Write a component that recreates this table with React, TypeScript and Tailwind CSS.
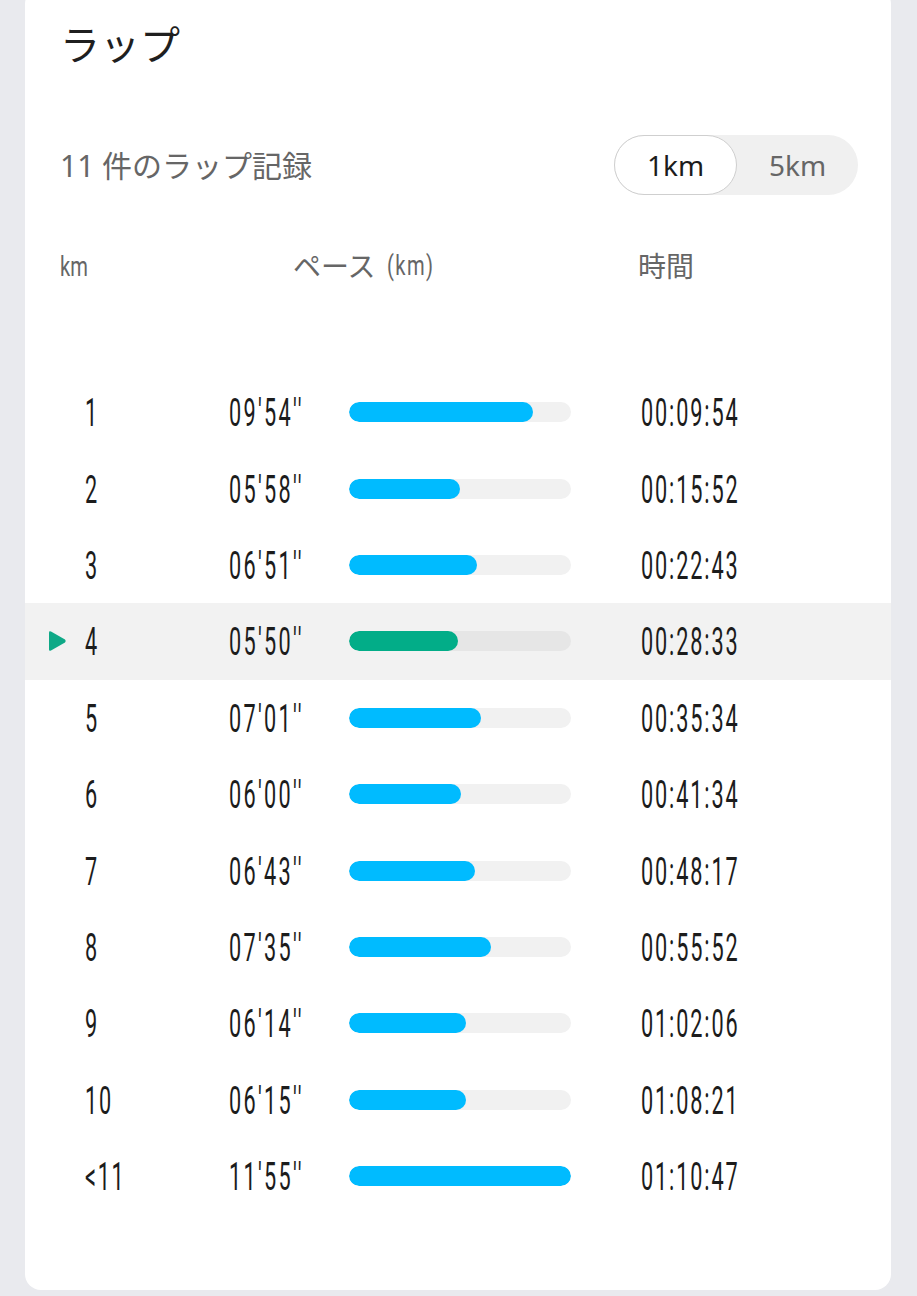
import type { ReactNode } from 'react'

type Lap = {
  km: string
  pace: string
  time: string
  fill: number
  current?: boolean
}

const laps: Lap[] = [
  { km: '1', pace: "09'54''", time: '00:09:54', fill: 184 },
  { km: '2', pace: "05'58''", time: '00:15:52', fill: 111 },
  { km: '3', pace: "06'51''", time: '00:22:43', fill: 128 },
  { km: '4', pace: "05'50''", time: '00:28:33', fill: 109, current: true },
  { km: '5', pace: "07'01''", time: '00:35:34', fill: 132 },
  { km: '6', pace: "06'00''", time: '00:41:34', fill: 112 },
  { km: '7', pace: "06'43''", time: '00:48:17', fill: 126 },
  { km: '8', pace: "07'35''", time: '00:55:52', fill: 142 },
  { km: '9', pace: "06'14''", time: '01:02:06', fill: 117 },
  { km: '10', pace: "06'15''", time: '01:08:21', fill: 117 },
  { km: '<11', pace: "11'55''", time: '01:10:47', fill: 222 },
]

const jp = { fontFamily: '"Noto Sans", "Noto Sans CJK JP", sans-serif' }
const cond = { fontFamily: 'Roboto, "Noto Sans CJK JP", sans-serif' }

function Cond({ children, className }: { children: ReactNode; className?: string }) {
  return (
    <span
      className={`inline-block origin-left whitespace-nowrap ${className ?? ''}`}
      style={cond}
    >
      {children}
    </span>
  )
}

function PlayMark() {
  return (
    <svg width="19" height="22" viewBox="0 0 19 22">
      <path
        d="M3 1.5 L17 9.6 Q18.5 11 17 12.4 L3 20.5 Q1 21.5 1 19.5 L1 2.5 Q1 0.5 3 1.5 Z"
        fill="#0fa987"
      />
    </svg>
  )
}

function LapRow({ lap }: { lap: Lap }) {
  return (
    <div
      className={`flex h-[76.4px] items-center pl-[23px] text-[38px] leading-none text-[#1c1c1c] ${
        lap.current ? 'bg-[#f2f2f2]' : ''
      }`}
    >
      <div className="flex w-[37px] items-center">{lap.current && <PlayMark />}</div>
      <div className="w-[144px]">
        <Cond className="scale-x-[0.57] tracking-[3px]">{lap.km}</Cond>
      </div>
      <div className="w-[120px]">
        <Cond className="scale-x-[0.57] tracking-[4px]">{lap.pace}</Cond>
      </div>
      <div
        className={`h-5 w-[222px] overflow-hidden rounded-full ${
          lap.current ? 'bg-[#e6e6e6]' : 'bg-[#f1f1f1]'
        }`}
      >
        <div
          className={`h-full rounded-full ${lap.current ? 'bg-[#02ad88]' : 'bg-[#00bbff]'}`}
          style={{ width: lap.fill }}
        />
      </div>
      <div className="w-[70px]" />
      <div>
        <Cond className="scale-x-[0.57] tracking-[3.3px]">{lap.time}</Cond>
      </div>
    </div>
  )
}

export default function App() {
  return (
    <div className="min-h-[1296px] w-[917px] overflow-hidden bg-[#e9eaee]">
      <div className="ml-[25px] -mt-[12px] w-[866px] rounded-2xl bg-white pt-[29px] pb-[76px]">
        <h1 className="pl-[35px] text-[40px] leading-[56px] text-[#1f1f1f]" style={jp}>
          ラップ
        </h1>

        <div className="mt-[62px] flex h-[60px] items-center justify-between pl-[35px] pr-[33px]">
          <p className="text-[30px] text-[#666666]" style={jp}>
            11 件のラップ記録
          </p>
          <div className="flex h-[60px] w-[244px] items-center rounded-full bg-[#f0f0f0]" style={jp}>
            <div className="flex h-[60px] w-[123px] items-center justify-center rounded-full border border-[#cfcfcf] bg-white text-[28px] text-[#1c1c1c]">
              1km
            </div>
            <div className="flex flex-1 items-center justify-center text-[28px] text-[#666666]">
              5km
            </div>
          </div>
        </div>

        <div className="mt-[51px] flex h-[40px] items-center text-[28px] text-[#666666]">
          <div className="w-[268px] pl-[35px]">
            <Cond className="scale-x-[0.72]">km</Cond>
          </div>
          <div className="flex w-[345px] items-center" style={jp}>
            <span>ペース</span>
            <Cond className="ml-[11px] scale-x-[0.72] tracking-[2px]">(km)</Cond>
          </div>
          <div style={jp}>時間</div>
        </div>

        <div className="mt-[88px]">
          {laps.map((lap) => (
            <LapRow key={lap.km} lap={lap} />
          ))}
        </div>
      </div>
    </div>
  )
}
